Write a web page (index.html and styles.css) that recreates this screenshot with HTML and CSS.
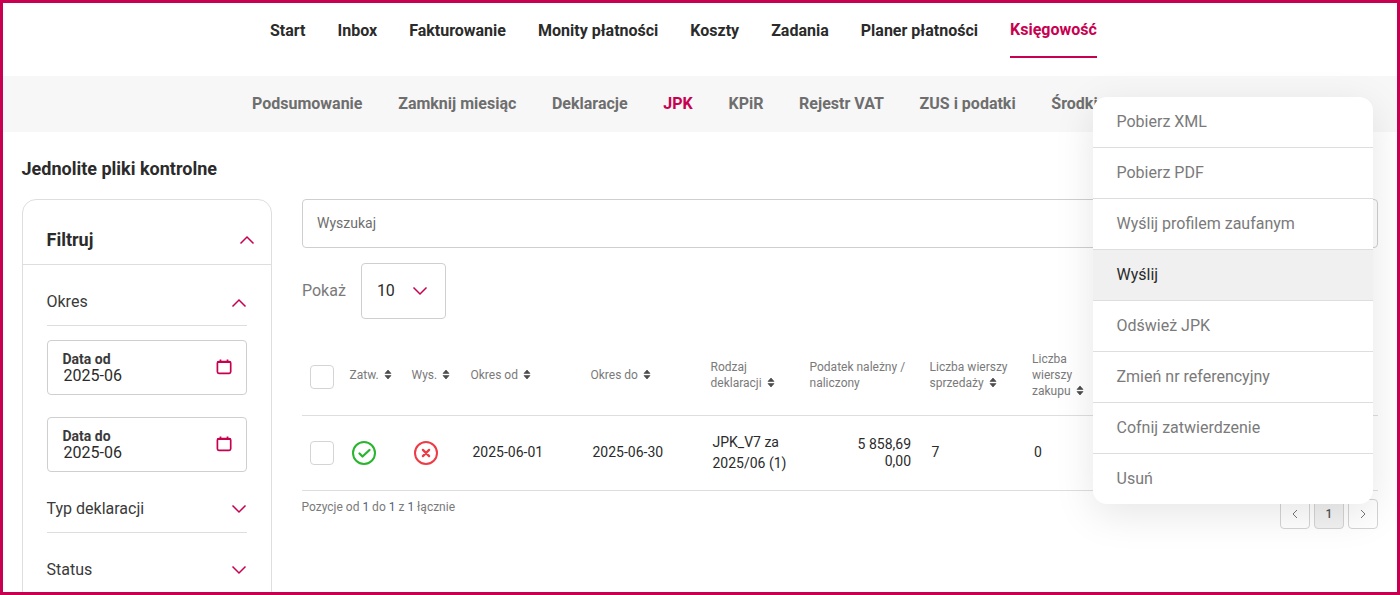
FILE: index.html
```html
<!DOCTYPE html>
<html lang="pl">
<head>
<meta charset="utf-8">
<title>Jednolite pliki kontrolne</title>
<link rel="stylesheet" href="styles.css">
</head>
<body>
<div class="frame">
  <nav class="topnav">
    <a>Start</a><a>Inbox</a><a>Fakturowanie</a><a>Monity płatności</a><a>Koszty</a><a>Zadania</a><a>Planer płatności</a><a class="active">Księgowość</a>
  </nav>
  <nav class="subnav">
    <a>Podsumowanie</a><a>Zamknij miesiąc</a><a>Deklaracje</a><a class="active">JPK</a><a>KPiR</a><a>Rejestr VAT</a><a>ZUS i podatki</a><a>Środki trwałe</a>
  </nav>
  <h1 class="title">Jednolite pliki kontrolne</h1>
  <div class="content">
    <aside class="filters">
      <div class="filters-head"><span>Filtruj</span>
        <svg class="chev" viewBox="0 0 16 10"><path d="M1.500 8.500 8 2l6.500 6.500"/></svg>
      </div>
      <div class="filters-body">
        <div class="group okres"><span>Okres</span>
          <svg class="chev" viewBox="0 0 16 10"><path d="M1.500 8.500 8 2l6.500 6.500"/></svg>
        </div>
        <div class="datefield">
          <div class="datetext"><b>Data od</b><span>2025-06</span></div>
          <svg class="cal" viewBox="0 0 16 16"><rect x="1.400" y="2.500" width="13.300" height="11.800" rx="1.500"/><path d="M4.500 .4v3M11.500 .4v3M1.400 3.200h13.300"/></svg>
        </div>
        <div class="datefield second">
          <div class="datetext"><b>Data do</b><span>2025-06</span></div>
          <svg class="cal" viewBox="0 0 16 16"><rect x="1.400" y="2.500" width="13.300" height="11.800" rx="1.500"/><path d="M4.500 .4v3M11.500 .4v3M1.400 3.200h13.300"/></svg>
        </div>
        <div class="group typ"><span>Typ deklaracji</span>
          <svg class="chev" viewBox="0 0 16 10"><path d="M1.500 1.500 8 8l6.500-6.500"/></svg>
        </div>
        <div class="group status"><span>Status</span>
          <svg class="chev" viewBox="0 0 16 10"><path d="M1.500 1.500 8 8l6.500-6.500"/></svg>
        </div>
      </div>
    </aside>
    <main class="main">
      <div class="search">Wyszukaj</div>
      <div class="show"><span>Pokaż</span>
        <div class="select"><span>10</span><svg class="chev" viewBox="0 0 16 10"><path d="M1.500 1.500 8 8l6.500-6.500"/></svg></div>
      </div>
      <table class="grid">
        <colgroup>
          <col class="c1"><col class="c2"><col class="c3"><col class="c4"><col class="c5"><col class="c6"><col class="c7"><col class="c8"><col class="c9"><col>
        </colgroup>
        <thead>
          <tr>
            <th><span class="check"></span></th>
            <th>Zatw. <svg class="sort" viewBox="0 0 8 11"><path d="M4 1 7 4.400H1zM4 10 1 6.600h6z"/></svg></th>
            <th>Wys. <svg class="sort" viewBox="0 0 8 11"><path d="M4 1 7 4.400H1zM4 10 1 6.600h6z"/></svg></th>
            <th>Okres od <svg class="sort" viewBox="0 0 8 11"><path d="M4 1 7 4.400H1zM4 10 1 6.600h6z"/></svg></th>
            <th>Okres do <svg class="sort" viewBox="0 0 8 11"><path d="M4 1 7 4.400H1zM4 10 1 6.600h6z"/></svg></th>
            <th>Rodzaj<br>deklaracji <svg class="sort" viewBox="0 0 8 11"><path d="M4 1 7 4.400H1zM4 10 1 6.600h6z"/></svg></th>
            <th>Podatek należny /<br>naliczony</th>
            <th>Liczba wierszy<br>sprzedaży <svg class="sort" viewBox="0 0 8 11"><path d="M4 1 7 4.400H1zM4 10 1 6.600h6z"/></svg></th>
            <th>Liczba<br>wierszy<br>zakupu <svg class="sort" viewBox="0 0 8 11"><path d="M4 1 7 4.400H1zM4 10 1 6.600h6z"/></svg></th>
            <th></th>
          </tr>
        </thead>
        <tbody>
          <tr>
            <td><span class="check"></span></td>
            <td class="icon"><svg class="state ok" viewBox="0 0 24 24"><circle cx="12" cy="12" r="11"/><path d="m7.500 12.500 3 3 7-6.500"/></svg></td>
            <td class="icon"><svg class="state bad" viewBox="0 0 24 24"><circle cx="12" cy="12" r="11"/><path d="m8.900 8.900 6.200 6.200M15.100 8.900l-6.200 6.200"/></svg></td>
            <td class="pad">2025-06-01</td>
            <td class="pad">2025-06-30</td>
            <td class="kind">JPK_V7 za 2025/06 (1)</td>
            <td class="num">5 858,69<br>0,00</td>
            <td class="pad">7</td>
            <td class="pad">0</td>
            <td></td>
          </tr>
        </tbody>
      </table>
      <div class="foot">
        <span class="info">Pozycje od <i>1</i> do <i>1</i> z <i>1</i> łącznie</span>
        <div class="pager">
          <span><svg viewBox="0 0 8 12"><path d="M6 2 2 6l4 4"/></svg></span>
          <span class="current">1</span>
          <span><svg viewBox="0 0 8 12"><path d="m2 2 4 4-4 4"/></svg></span>
        </div>
      </div>
    </main>
  </div>
  <ul class="menu">
    <li>Pobierz XML</li>
    <li>Pobierz PDF</li>
    <li>Wyślij profilem zaufanym</li>
    <li class="hover">Wyślij</li>
    <li>Odśwież JPK</li>
    <li>Zmień nr referencyjny</li>
    <li>Cofnij zatwierdzenie</li>
    <li>Usuń</li>
  </ul>
</div>
</body>
</html>
```
FILE: styles.css
```css
* { box-sizing: border-box; }
html, body { margin: 0; height: 100%; overflow: hidden; }
body { font-family: Roboto, "Liberation Sans", sans-serif; color: #2b2b2b; background: #fff; }
.frame { position: relative; width: 1400px; height: 595px; border: 3px solid #c80050; overflow: hidden; background: #fff; }

.topnav { height: 73px; display: flex; gap: 32px; padding-left: 267px; }
.topnav a { height: 55px; padding-top: 18px; font-size: 16px; font-weight: 700; line-height: 19px; color: #2b2b2b; }
.topnav a.active { color: #c80050; border-bottom: 2px solid #c80050; padding-top: 17px; }

.subnav { height: 56px; padding-bottom: 2px; background: #f7f7f7; display: flex; gap: 35.700px; padding-left: 249px; align-items: center; white-space: nowrap; }
.subnav a { font-size: 16px; font-weight: 700; line-height: 19px; color: #6e6e6e; }
.subnav a.active { color: #c80050; }

.title { margin: 26px 0 0 18.500px; font-size: 18px; line-height: 21px; font-weight: 700; color: #2b2b2b; }

.content { display: flex; gap: 30px; padding-left: 19px; margin-top: 20px; }

.chev { width: 16px; height: 10px; flex: none; fill: none; stroke: #c80050; stroke-width: 1.500; }

.filters { width: 250px; height: 420px; flex: none; border: 1px solid #dedede; border-radius: 14px; }
.filters-head { height: 65px; padding: 15px 16px 0 23.500px; display: flex; align-items: center; justify-content: space-between; border-bottom: 1px solid #dedede; font-size: 18px; font-weight: 700; }
.filters-body { padding: 0 24px 0 23.500px; }
.group { height: 61px; display: flex; justify-content: space-between; align-items: center; border-bottom: 1px solid #dedede; font-size: 16px; color: #3a3a3a; padding-top: 12px; margin-bottom: 14px; }
.group.okres .chev { margin-top: 4px; }
.group.typ { height: 61px; margin-bottom: 0; padding: 13px 0 1px; }
.group.status { margin-bottom: 0; padding-top: 11px; border-bottom: 0; }
.group.typ .chev, .group.status .chev { margin-top: 2px; }
.datefield { height: 55px; margin-bottom: 22px; border: 1px solid #cfcfcf; border-radius: 4px; display: flex; align-items: center; justify-content: space-between; padding: 0 14px 0 15px; }
.datefield.second { margin-bottom: 0; }
.datetext { display: flex; flex-direction: column; }
.datetext b { font-size: 14px; line-height: 16px; font-weight: 700; color: #3a3a3a; }
.datetext span { font-size: 16px; line-height: 17px; color: #2b2b2b; margin-left: 1px; }
.cal { width: 16px; height: 16px; margin-bottom: 1px; fill: none; stroke: #c80050; stroke-width: 1.700; }

.main { width: 1076px; flex: none; }
.search { height: 49px; border: 1px solid #cfcfcf; border-radius: 4px; padding: 0 14px 1px; display: flex; align-items: center; font-size: 14px; color: #6e6e6e; }
.show { display: flex; align-items: center; gap: 15px; margin-top: 15px; font-size: 16px; color: #7a7a7a; }
.show > span { padding-bottom: 1px; }
.select { width: 85px; height: 56px; border: 1px solid #cfcfcf; border-radius: 4px; display: flex; align-items: center; gap: 17px; padding: 0 0 1px 15px; color: #2b2b2b; }

.grid { width: 1076px; table-layout: fixed; border-collapse: collapse; margin-top: 21px; }
.c1 { width: 40px; } .c2 { width: 62px; } .c3 { width: 59px; } .c4 { width: 120px; } .c5 { width: 120px; }
.c6 { width: 99px; } .c7 { width: 120px; } .c8 { width: 102.500px; } .c9 { width: 80px; }
.grid th { height: 75px; text-align: left; vertical-align: middle; padding: 0 0 5px 7.500px; font-size: 12px; line-height: 16px; font-weight: 400; color: #7a7a7a; border-bottom: 1px solid #dedede; white-space: nowrap; }
.grid th:first-child { padding: 0 0 0 8px; }
.grid td:first-child { padding-left: 8px; }
.grid td { height: 75px; padding: 0 0 0 9.500px; font-size: 14px; line-height: 21px; color: #2b2b2b; border-bottom: 1px solid #dedede; vertical-align: middle; }
.grid td.icon { padding-left: 10px; }
.grid td.kind { padding-right: 8px; }
.grid td.num { text-align: right; line-height: 17px; padding: 0 11px 0 0; }
.check { display: block; width: 24px; height: 24px; border: 1px solid #d4d4d4; border-radius: 4px; background: #fff; }
.sort { width: 8px; height: 11px; fill: #4d4d4d; stroke: #4d4d4d; stroke-width: .7; stroke-linejoin: round; vertical-align: -1px; margin-left: 2px; }
.state { display: block; width: 24px; height: 24px; fill: none; stroke-width: 2; }
.state.ok { stroke: #2ab52f; }
.state.bad { stroke: #ee3b45; }
.state path { stroke-linecap: round; stroke-linejoin: round; stroke-width: 2.300; }

.foot { display: flex; justify-content: space-between; align-items: flex-start; margin-top: 8px; }
.info { font-size: 12px; line-height: 16px; color: #7a7a7a; margin-left: -.5px; }
.info i { font-style: normal; color: #54607a; }
.pager { display: flex; gap: 4px; }
.pager span { width: 30px; height: 30px; border: 1px solid #d4d4d4; border-radius: 4px; display: flex; align-items: center; justify-content: center; font-size: 12px; font-weight: 500; color: #555; }
.pager svg { width: 8px; height: 12px; fill: none; stroke: #777; stroke-width: 1; }
.pager .current { background: #f2f2f2; }

.menu { position: absolute; left: 1090px; top: 94px; width: 280px; margin: 0; padding: 0; list-style: none; background: #fff; border-radius: 14px; box-shadow: 0 10px 40px rgba(0,0,0,.10); overflow: hidden; }
.menu li { height: 51px; padding: 0 0 2px 23.500px; display: flex; align-items: center; font-size: 16px; color: #7a7a7a; border-bottom: 1px solid #dedede; }
.menu li:last-child { border-bottom: 0; height: 50px; }
.menu li.hover { background: #f0f0f0; color: #2b2b2b; }
```
